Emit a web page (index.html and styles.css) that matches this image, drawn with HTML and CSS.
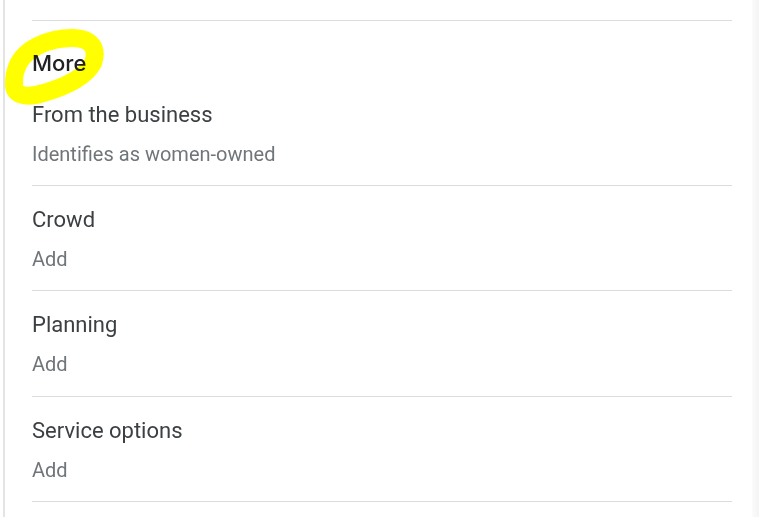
FILE: index.html
```html
<!DOCTYPE html>
<html>
<head>
<meta charset="utf-8">
<link rel="stylesheet" href="styles.css">
</head>
<body>
<div class="panel">
  <div class="content">
    <div class="top-rule"></div>
    <div class="heading-wrap">
      <h2 class="heading">More</h2>
      <svg class="marker" width="120" height="100" viewBox="0 0 120 100">
        <path d="M16 49 C22 27, 50 17, 72 17 C92 17, 98 28, 93 42 C85 57, 62 67, 40 73 C26 77, 14 74, 14 64 C14 57, 14 53, 16 49 Z" fill="none" stroke="#ffff00" stroke-width="18" stroke-linejoin="round"/>
      </svg>
    </div>
    <div class="item first">
      <div class="title">From the business</div>
      <div class="sub">Identifies as women-owned</div>
    </div>
    <div class="item">
      <div class="title">Crowd</div>
      <div class="sub">Add</div>
    </div>
    <div class="item tall">
      <div class="title">Planning</div>
      <div class="sub">Add</div>
    </div>
    <div class="item">
      <div class="title">Service options</div>
      <div class="sub">Add</div>
    </div>
  </div>
  <div class="edge"></div>
</div>
</body>
</html>
```

FILE: styles.css
```css
html, body {
  margin: 0;
  padding: 0;
  background: #ffffff;
  height: 517px;
  overflow: hidden;
}
.panel {
  display: flex;
  height: 517px;
  border-left: 2px solid #e4e4e4;
  margin-left: 3px;
}
.content {
  flex: 1;
  padding-left: 27px;
  padding-right: 20px;
  font-family: Roboto, "Liberation Sans", sans-serif;
}
.edge {
  width: 7px;
  background: linear-gradient(to right, #fbfbfb, #f4f4f4);
}
.top-rule {
  height: 20px;
  border-bottom: 1px solid #dadce0;
}
.heading-wrap {
  position: relative;
  height: 81px;
}
.heading {
  margin: 0;
  padding-top: 29px;
  font-family: Inter, "Open Sans", sans-serif;
  font-weight: 500;
  font-size: 22px;
  line-height: 26px;
  color: #202124;
  position: relative;
}
.marker {
  position: absolute;
  left: -32px;
  top: 0;
  mix-blend-mode: multiply;
}
.item {
  border-bottom: 1px solid #dadce0;
  height: 105px;
  padding-top: 21px;
  box-sizing: border-box;
}
.item.tall {
  height: 106px;
}
.item.first {
  height: 84px;
  padding-top: 0;
}
.title {
  font-size: 22px;
  line-height: 26px;
  color: #3c4043;
}
.sub {
  margin-top: 14px;
  font-size: 20px;
  line-height: 24px;
  color: #70757a;
}
```
